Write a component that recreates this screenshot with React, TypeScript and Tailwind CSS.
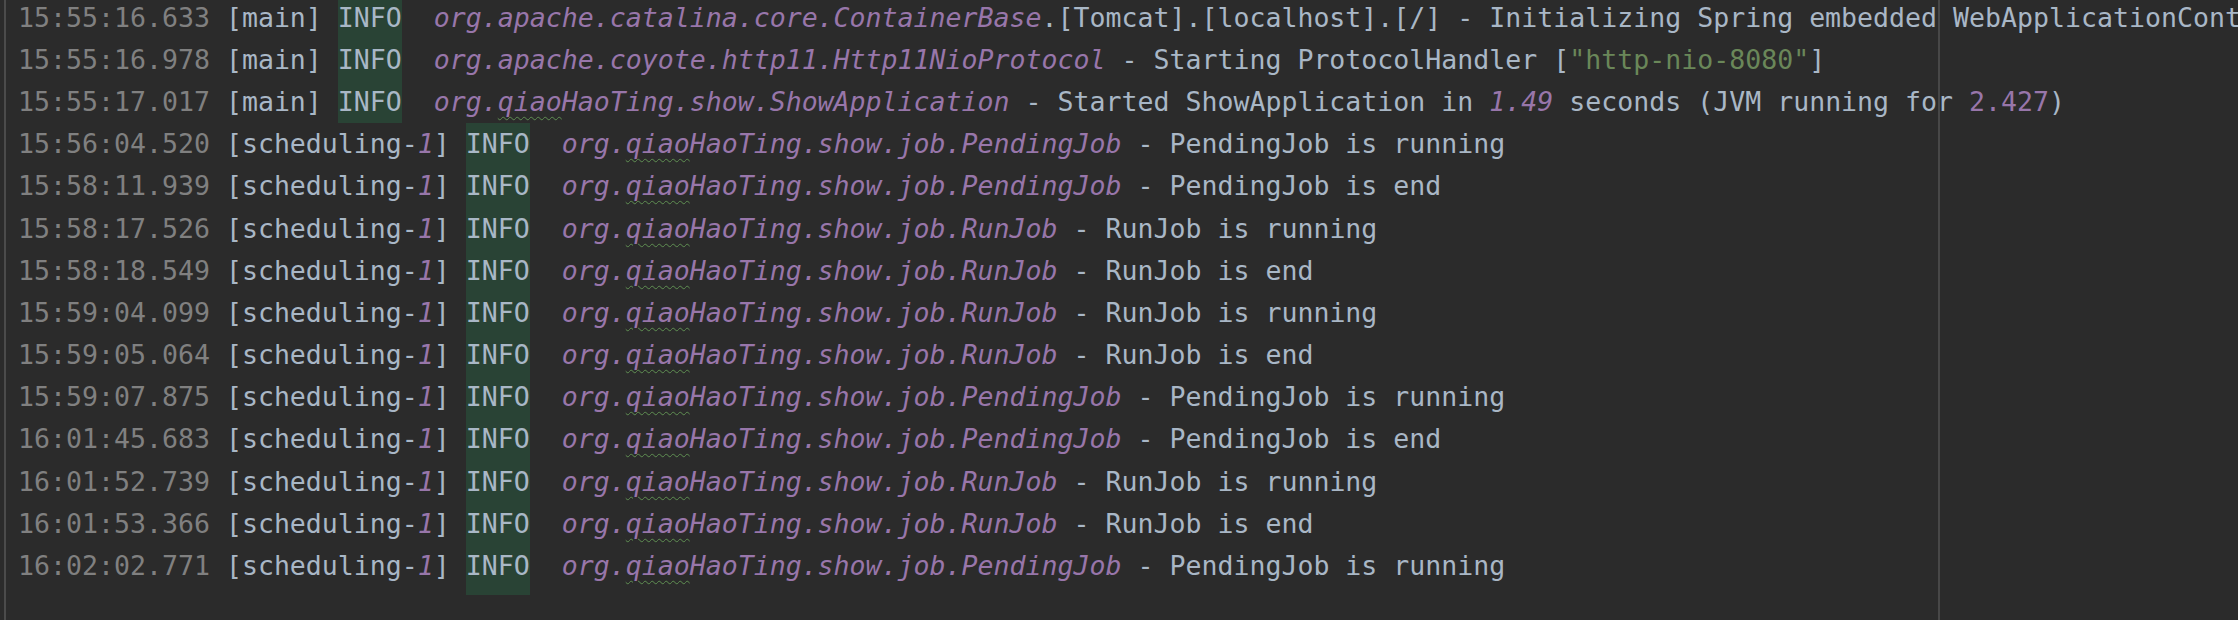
type Seg = { t: string; c?: string; i?: boolean; sq?: boolean; hl?: boolean };

const FG = "text-[#a9b7c6]";
const PURPLE = "text-[#9876aa]";
const GRAY = "text-[#808080]";
const GREEN = "text-[#6a8759]";

const info: Seg = { t: "INFO", c: FG, hl: true };

const mainRow = (time: string, rest: Seg[]): Seg[] => [
  { t: time + " ", c: GRAY },
  { t: "[main] ", c: FG },
  info,
  { t: "  " },
  ...rest,
];

const schedRow = (time: string, job: string, msg: string): Seg[] => [
  { t: time + " ", c: GRAY },
  { t: "[scheduling-", c: FG },
  { t: "1", c: PURPLE, i: true },
  { t: "] ", c: FG },
  info,
  { t: "  " },
  { t: "org.", c: PURPLE, i: true },
  { t: "qiao", c: PURPLE, i: true, sq: true },
  { t: "HaoTing.show.job." + job, c: PURPLE, i: true },
  { t: " - " + msg, c: FG },
];

const rows: Seg[][] = [
  mainRow("15:55:16.633", [
    { t: "org.apache.catalina.core.ContainerBase", c: PURPLE, i: true },
    { t: ".[Tomcat].[localhost].[/] - Initializing Spring embedded WebApplicationContext", c: FG },
  ]),
  mainRow("15:55:16.978", [
    { t: "org.apache.coyote.http11.Http11NioProtocol", c: PURPLE, i: true },
    { t: " - Starting ProtocolHandler [", c: FG },
    { t: '"http-nio-8080"', c: GREEN },
    { t: "]", c: FG },
  ]),
  mainRow("15:55:17.017", [
    { t: "org.", c: PURPLE, i: true },
    { t: "qiao", c: PURPLE, i: true, sq: true },
    { t: "HaoTing.show.ShowApplication", c: PURPLE, i: true },
    { t: " - Started ShowApplication in ", c: FG },
    { t: "1.49", c: PURPLE, i: true },
    { t: " seconds (JVM running for ", c: FG },
    { t: "2.427", c: PURPLE },
    { t: ")", c: FG },
  ]),
  schedRow("15:56:04.520", "PendingJob", "PendingJob is running"),
  schedRow("15:58:11.939", "PendingJob", "PendingJob is end"),
  schedRow("15:58:17.526", "RunJob", "RunJob is running"),
  schedRow("15:58:18.549", "RunJob", "RunJob is end"),
  schedRow("15:59:04.099", "RunJob", "RunJob is running"),
  schedRow("15:59:05.064", "RunJob", "RunJob is end"),
  schedRow("15:59:07.875", "PendingJob", "PendingJob is running"),
  schedRow("16:01:45.683", "PendingJob", "PendingJob is end"),
  schedRow("16:01:52.739", "RunJob", "RunJob is running"),
  schedRow("16:01:53.366", "RunJob", "RunJob is end"),
  schedRow("16:02:02.771", "PendingJob", "PendingJob is running"),
];

const LogLine = ({ segs, last }: { segs: Seg[]; last: boolean }) => (
  <div className="flex h-[42.17px] shrink-0 items-center whitespace-pre">
    {segs.map((s, k) =>
      s.hl ? (
        <span
          key={k}
          className={`flex shrink-0 items-center self-stretch bg-[#294335] ${s.c} ${
            last ? "shadow-[0_8px_0_#294335]" : ""
          }`}
        >
          {s.t}
        </span>
      ) : (
        <span
          key={k}
          className={`shrink-0 ${s.c ?? ""} ${s.i ? "italic" : ""} ${
            s.sq ? "underline decoration-wavy decoration-[#5f8f52] decoration-1 underline-offset-[5px]" : ""
          }`}
        >
          {s.t}
        </span>
      )
    )}
  </div>
);

export default function App() {
  return (
    <div className="relative flex h-[620px] w-full overflow-hidden bg-[#2b2b2b] font-['DejaVu_Sans_Mono','Liberation_Mono',monospace] text-[26.576px]">
      <div className="w-[4px] shrink-0" />
      <div className="w-[2px] shrink-0 bg-[#4b4b4b]" />
      <div className="-mt-[3.3px] flex min-w-0 flex-col pl-[12px]">
        {rows.map((r, idx) => (
          <LogLine key={idx} segs={r} last={idx === rows.length - 1} />
        ))}
      </div>
      {/* right margin guide */}
      <div className="pointer-events-none absolute inset-y-0 left-[1938px] w-[2px] bg-[#474747]" />
    </div>
  );
}
